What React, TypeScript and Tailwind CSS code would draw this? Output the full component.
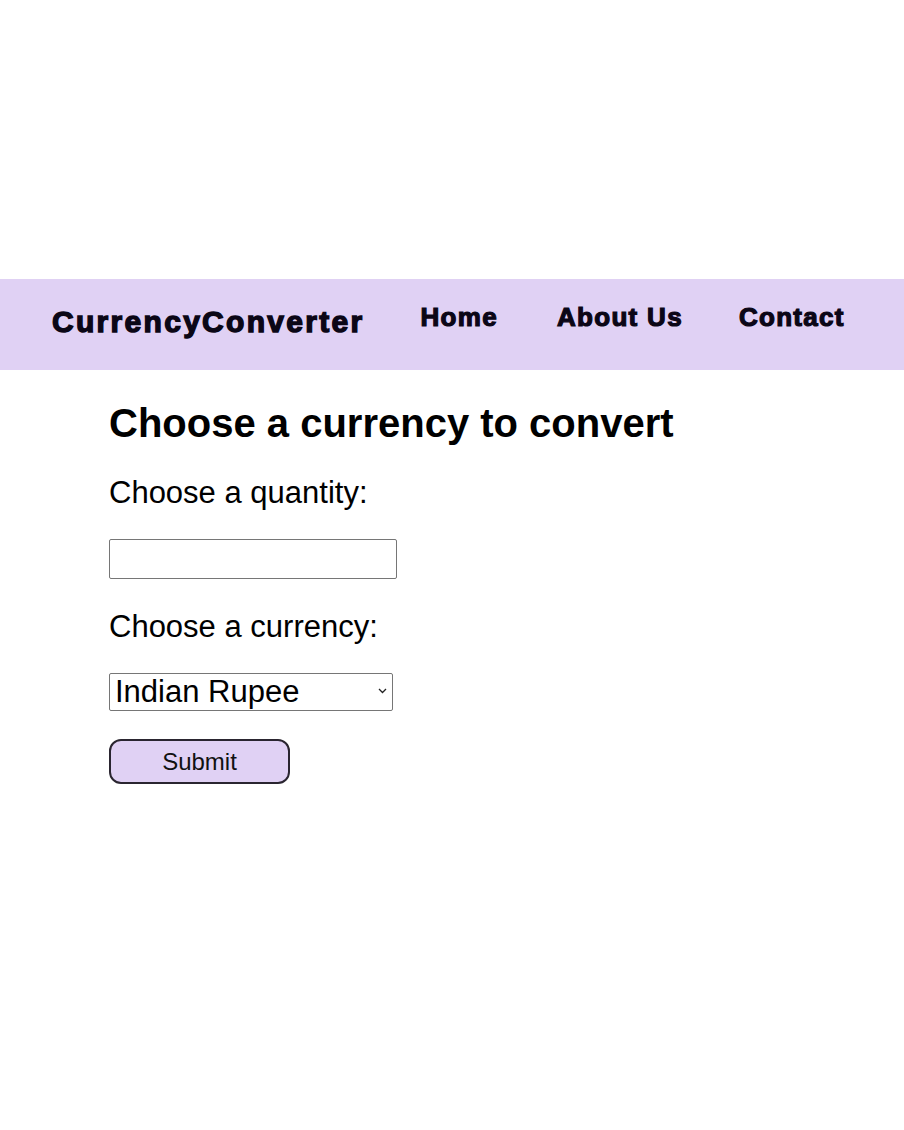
export default function App() {
  const navFont = { fontFamily: '"Liberation Sans", Arial, sans-serif' };
  return (
    <div className="min-h-[1130px] w-full bg-white" style={{ fontFamily: '"Liberation Sans", Arial, sans-serif' }}>
      <div className="h-[279px]" />
      <nav className="flex h-[91px] items-center bg-[#e0d1f4] text-[#0b0616]" style={navFont}>
        <div className="ml-[52px] mb-[5px] text-[30px] leading-[34px] font-bold tracking-[2.3px] [-webkit-text-stroke:1.4px_#0b0616]">
          CurrencyConverter
        </div>
        <ul className="ml-[56px] mb-[15px] flex text-[26px] leading-[30px] font-bold tracking-[1.3px] [-webkit-text-stroke:1.2px_#0b0616]">
          <li className="mr-[59px]">Home</li>
          <li className="mr-[56px]">About Us</li>
          <li>Contact</li>
        </ul>
      </nav>
      <main className="flex flex-col items-start pl-[109px] text-black">
        <h1 className="mt-[29px] text-[40px] leading-[48px] font-bold">Choose a currency to convert</h1>
        <label className="mt-[28px] text-[31px] leading-[36px]">Choose a quantity:</label>
        <input
          type="text"
          className="mt-[28px] h-[40px] w-[288px] rounded-[2px] border border-[#767676] bg-white px-2"
        />
        <label className="mt-[30px] text-[31px] leading-[36px]">Choose a currency:</label>
        <div className="relative mt-[28px] h-[38px] w-[284px]">
          <select className="h-full w-full appearance-none rounded-[2px] border border-[#767676] bg-white pl-[5px] text-[31px] leading-[36px] text-black">
            <option>Indian Rupee</option>
          </select>
          <svg className="pointer-events-none absolute right-[6px] top-[15px]" width="9" height="6" viewBox="0 0 9 6">
            <path d="M1 1l3.5 3.5L8 1" fill="none" stroke="#222" strokeWidth="1.3" />
          </svg>
        </div>
        <button className="mt-[28px] h-[45px] w-[181px] rounded-[12px] border-2 border-[#2a2530] bg-[#e0d1f4] text-[24px] text-[#111]">
          Submit
        </button>
      </main>
    </div>
  );
}
